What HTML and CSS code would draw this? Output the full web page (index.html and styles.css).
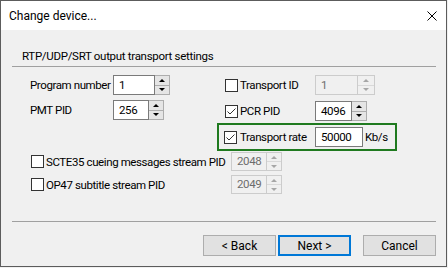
FILE: index.html
```html
<!DOCTYPE html>
<html lang="en">
<head>
  <meta charset="UTF-8">
  <title>Change device...</title>
  <link rel="stylesheet" href="styles.css">
</head>
<body>
  <div class="window">
    <div class="titlebar">
      <span class="title">Change device...</span>
      <svg class="close" width="10" height="10" viewBox="0 0 10 10">
        <path d="M0.5 0.5 L9.5 9.5 M9.5 0.5 L0.5 9.5" stroke="#000" stroke-width="1" fill="none"/>
      </svg>
    </div>

    <div class="client">
      <div class="group-head">RTP/UDP/SRT output transport settings</div>
      <div class="sep"></div>

      <div class="form">
        <div class="left">
          <div class="row">
            <span class="label-l">Program number</span>
            <span class="edit w42">1</span>
            <span class="spin"><span class="up"></span><span class="down"></span></span>
          </div>
          <div class="row">
            <span class="label-l">PMT PID</span>
            <span class="edit w36">256</span>
            <span class="spin"><span class="up"></span><span class="down"></span></span>
          </div>
        </div>

        <div class="right">
          <div class="row row-r">
            <span class="check"></span>
            <span class="label-r">Transport ID</span>
            <span class="edit w43 disabled">1</span>
            <span class="spin spin-wide disabled"><span class="up"></span><span class="down"></span></span>
          </div>
          <div class="row row-r">
            <span class="check checked">
              <svg width="11" height="11" viewBox="0 0 11 11"><polyline points="1.5,5.5 4,8 9.5,2.5" fill="none" stroke="#333" stroke-width="1"/></svg>
            </span>
            <span class="label-r">PCR PID</span>
            <span class="edit w37">4096</span>
            <span class="spin"><span class="up"></span><span class="down"></span></span>
          </div>
          <div class="row highlight">
            <span class="check checked">
              <svg width="11" height="11" viewBox="0 0 11 11"><polyline points="1.5,5.5 4,8 9.5,2.5" fill="none" stroke="#333" stroke-width="1"/></svg>
            </span>
            <span class="label-r">Transport rate</span>
            <span class="edit w48">50000</span>
            <span class="unit">Kb/s</span>
          </div>
        </div>
      </div>

      <div class="extra">
        <div class="row row-x">
          <span class="check"></span>
          <span class="label-x">SCTE35 cueing messages stream PID</span>
          <span class="edit w36 disabled">2048</span>
          <span class="spin disabled"><span class="up"></span><span class="down"></span></span>
        </div>
        <div class="row row-x">
          <span class="check"></span>
          <span class="label-x">OP47 subtitle stream PID</span>
          <span class="edit w36 disabled">2049</span>
          <span class="spin disabled"><span class="up"></span><span class="down"></span></span>
        </div>
      </div>

      <div class="sep sep-bottom"></div>

      <div class="buttons">
        <button class="btn">&lt; Back</button>
        <button class="btn default">Next &gt;</button>
        <button class="btn cancel">Cancel</button>
      </div>
    </div>
  </div>
</body>
</html>
```

FILE: styles.css
```css
* {
  box-sizing: border-box;
}
body {
  margin: 0;
  background: #f0f0f0;
  font-family: Roboto, "Liberation Sans", sans-serif;
  font-size: 12px;
  color: #000;
}
.window {
  width: 447px;
  height: 267px;
  border: 1px solid #5c5c5c;
  background: #f0f0f0;
  display: flex;
  flex-direction: column;
}
.titlebar {
  height: 29px;
  background: #fff;
  display: flex;
  align-items: center;
  justify-content: space-between;
  padding: 0 9px 0 8px;
}
.title {
  font-size: 12px;
}
.client {
  flex: 1;
  font-size: 11.5px;
  letter-spacing: -0.4px;
}
.group-head {
  margin: 18px 0 0 21px;
  line-height: 16px;
  letter-spacing: -0.3px;
}
.sep {
  margin: 2px 0 0 11px;
  width: 424px;
  height: 1px;
  background: #a0a0a0;
}
.form {
  display: flex;
  margin-top: 8px;
}
.left {
  margin-left: 29px;
  width: 187px;
  display: flex;
  flex-direction: column;
  gap: 5px;
}
.right {
  width: 180px;
  display: flex;
  flex-direction: column;
  gap: 6px;
}
.row {
  display: flex;
  align-items: center;
  height: 20px;
  white-space: nowrap;
}
.label-l {
  width: 83px;
}
.row-r {
  padding-left: 8px;
}
.label-r {
  width: 75px;
}
.check {
  width: 13px;
  height: 13px;
  border: 1px solid #333;
  background: #fff;
  margin-right: 2px;
  flex: none;
  display: flex;
}
.highlight {
  height: 28px;
  margin-top: -4px;
  border: 2px solid #1f7a1f;
  padding-left: 5px;
}
.highlight .check {
  margin-right: 3px;
}
.edit {
  height: 20px;
  border: 1px solid #7a7a7a;
  background: #fff;
  padding-left: 5px;
  line-height: 18px;
  flex: none;
}
.edit.disabled {
  border-color: #cccccc;
  background: #f0f0f0;
  color: #6d6d6d;
}
.w36 { width: 36px; }
.w37 { width: 37px; }
.w42 { width: 42px; }
.w43 { width: 43px; }
.w48 { width: 48px; }
.spin {
  width: 15px;
  height: 20px;
  display: flex;
  flex-direction: column;
  border: 1px solid #adadad;
  border-left: none;
  background: #e5e5e5;
  flex: none;
}
.spin-wide {
  width: 17px;
}
.spin.disabled {
  border-color: #cccccc;
  background: #f0f0f0;
}
.spin .up,
.spin .down {
  flex: 1;
  display: flex;
  align-items: center;
  justify-content: center;
}
.spin .up {
  border-bottom: 1px solid #adadad;
}
.spin.disabled .up {
  border-bottom-color: #d9d9d9;
}
.spin .up::before {
  content: "";
  border-left: 3px solid transparent;
  border-right: 3px solid transparent;
  border-bottom: 3px solid #000;
}
.spin .down::before {
  content: "";
  border-left: 3px solid transparent;
  border-right: 3px solid transparent;
  border-top: 3px solid #000;
}
.spin.disabled .up::before {
  border-bottom-color: #a6a6a6;
}
.spin.disabled .down::before {
  border-top-color: #a6a6a6;
}
.unit {
  margin-left: 2px;
}
.extra {
  margin: 1px 0 0 30px;
  display: flex;
  flex-direction: column;
  gap: 4px;
}
.row-x {
  height: 19px;
}
.row-x .edit,
.row-x .spin {
  height: 19px;
}
.row-x .edit {
  line-height: 17px;
}
.label-x {
  width: 185px;
}
.sep-bottom {
  margin-top: 27px;
}
.buttons {
  display: flex;
  justify-content: flex-end;
  gap: 2px;
  padding-right: 10px;
  margin-top: 13px;
}
.btn {
  width: 73px;
  height: 21px;
  border: 1px solid #adadad;
  background: #e1e1e1;
  font-family: inherit;
  font-size: 12px;
  color: #000;
  padding: 0;
}
.btn.default {
  border: 2px solid #0078d7;
}
.btn.cancel {
  margin-left: 10px;
}
```
